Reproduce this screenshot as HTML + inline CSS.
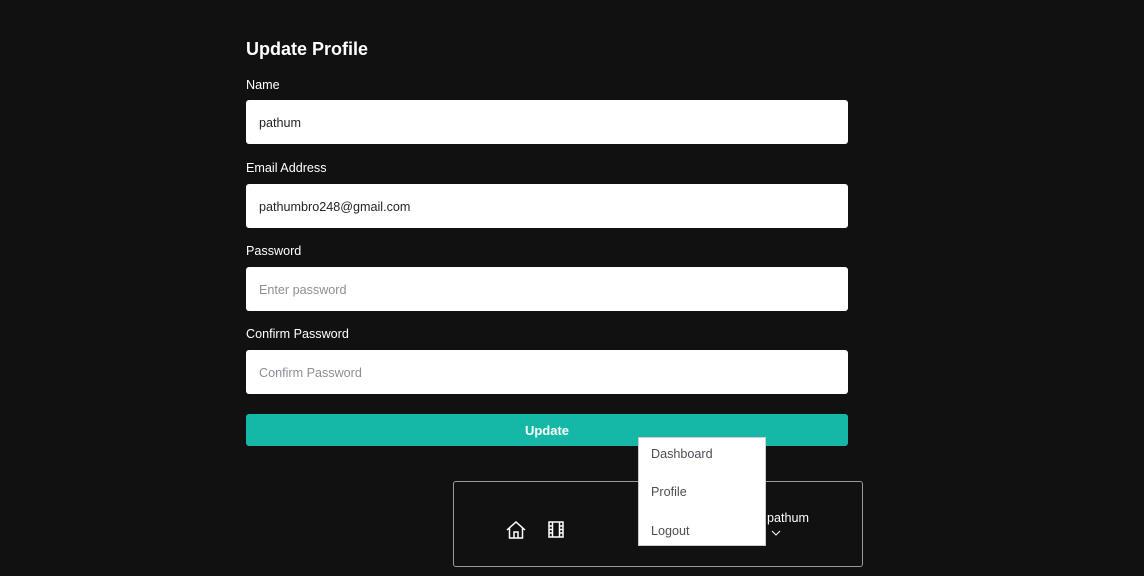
<!DOCTYPE html>
<html><head><meta charset="utf-8"><style>
*{box-sizing:border-box;margin:0;padding:0}
body{width:1144px;height:576px;background:#111;font-family:"Liberation Sans",sans-serif;position:relative;overflow:hidden;color:#fff}
h1{position:absolute;left:246px;top:39px;font-size:18px;font-weight:bold}
.lbl{position:absolute;left:246px;font-size:12.6px;color:#fff}
.inp{position:absolute;left:246px;width:602px;height:44px;background:#fff;border-radius:3px;font-size:12.6px;color:#212529;padding-left:13px;line-height:47px}
.ph{color:#8a8f96}
.btn{position:absolute;left:246px;top:414px;width:602px;height:32px;background:#15b8a6;border-radius:3px;text-align:center;line-height:33px;font-weight:bold;font-size:13px}
.nav{position:absolute;left:453px;top:481px;width:410px;height:86px;border:1px solid #9a9a9a;border-radius:3px}
.dd{position:absolute;left:638px;top:437px;width:128px;height:109px;background:#fff;border:1px solid #ccc}
.dd div{position:absolute;left:12px;font-size:12.6px;color:#4a4f55}
</style></head><body>
<h1>Update Profile</h1>
<div class="lbl" style="top:78px">Name</div>
<div class="inp" style="top:100px">pathum</div>
<div class="lbl" style="top:161px">Email Address</div>
<div class="inp" style="top:184px">pathumbro248@gmail.com</div>
<div class="lbl" style="top:244px">Password</div>
<div class="inp ph" style="top:267px">Enter password</div>
<div class="lbl" style="top:327px">Confirm Password</div>
<div class="inp ph" style="top:350px">Confirm Password</div>
<div class="btn">Update</div>
<div class="nav">
<svg style="position:absolute;left:52px;top:39px" width="20" height="18" viewBox="0 0 20 18" fill="none" stroke="#fff" stroke-width="1.5"><path d="M1 9L10 1l9 8M3.5 7v10h13V7M8 17v-6h4v6"/></svg>
<svg style="position:absolute;left:94px;top:39px" width="16" height="17" viewBox="0 0 16 17" fill="none" stroke="#fff" stroke-width="1.5"><rect x="1" y="1" width="14" height="15"/><path d="M4.5 1v15M11.5 1v15M1 5h3.5M1 8.5h3.5M1 12h3.5M11.5 5H15M11.5 8.5H15M11.5 12H15"/></svg>
<div style="position:absolute;left:313px;top:29px;font-size:12.6px">pathum</div>
<svg style="position:absolute;left:317px;top:48px" width="10" height="6" viewBox="0 0 10 6" fill="none" stroke="#fff" stroke-width="1"><path d="M1 1l4 4 4-4"/></svg>
</div>
<div class="dd">
<div style="top:9px">Dashboard</div>
<div style="top:47px">Profile</div>
<div style="top:86px">Logout</div>
</div>
</body></html>
